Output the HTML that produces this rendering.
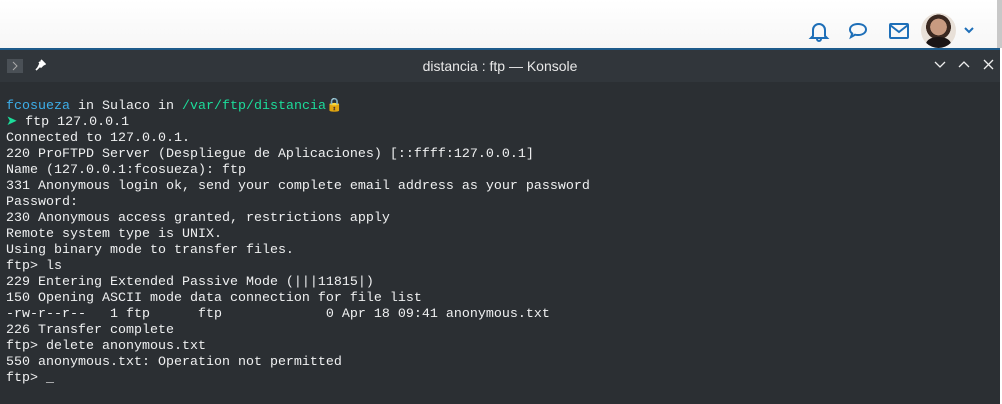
<!DOCTYPE html>
<html><head><meta charset="utf-8"><style>
html,body{margin:0;padding:0;width:1002px;height:402px;overflow:hidden;background:#fff}
.top{position:absolute;left:0;top:0;width:1002px;height:48px;background:linear-gradient(#fff,#f6f6f6)}
.sb{position:absolute;left:997px;top:0;width:5px;height:48px;background:#c8c8c8}
.win{position:absolute;left:0;top:48px;width:1000px;height:354px;background:#2b2f33;border-top:2px solid #1d5a8a}
.title{position:absolute;left:0;top:0;width:1000px;height:32px;background:#31363b;color:#e8e8e8;font:14px "Liberation Sans",sans-serif}
.term{position:absolute;left:6px;top:49px;font:13.33px/16px "Liberation Mono",monospace;color:#eff0f1;white-space:pre}
.b{color:#3daee9}.g{color:#1cdc9a}.y{color:#f0b400}
</style></head><body>
<div class="top">
<svg style="position:absolute;left:808px;top:20px" width="22" height="22" viewBox="0 0 22 22" fill="none" stroke="#1e6fb8" stroke-width="2"><path d="M5 16V10a6 6 0 0 1 12 0v6l2 2H3z"/><path d="M9 19a2 2 0 0 0 4 0"/></svg>
<svg style="position:absolute;left:848px;top:22px" width="20" height="18" viewBox="0 0 20 18" fill="none" stroke="#1e6fb8" stroke-width="2"><path d="M10 2c5 0 8 2.5 8 5.5S15 13 10 13c-1 0-2 0-3-.3L3 15l1.2-3.5C2.8 10.5 2 9 2 7.5 2 4.5 5 2 10 2z"/></svg>
<svg style="position:absolute;left:889px;top:23px" width="20" height="16" viewBox="0 0 20 16" fill="none" stroke="#1e6fb8" stroke-width="2"><rect x="1" y="1" width="18" height="14" rx="1"/><path d="M1 2l9 7 9-7"/></svg>
<div style="position:absolute;left:921px;top:13px;width:35px;height:35px;border-radius:50%;background:radial-gradient(circle at 50% 40%,#c89a80 0 30%,#3a2820 31% 45%,#e8e0d8 46%);overflow:hidden"><div style="position:absolute;left:5px;top:24px;width:25px;height:14px;background:#1a1414;border-radius:50% 50% 0 0"></div></div>
<svg style="position:absolute;left:964px;top:26px" width="10" height="8" viewBox="0 0 10 8" fill="none" stroke="#1e6fb8" stroke-width="2"><path d="M1 2l4 4 4-4"/></svg>
</div>
<div class="sb"></div>
<div class="win">
<div class="title">
<div style="position:absolute;left:7px;top:9px;width:16px;height:14px;background:#4a5056"></div>
<svg style="position:absolute;left:11px;top:11px" width="8" height="10" viewBox="0 0 8 10" fill="none" stroke="#aaa" stroke-width="1"><path d="M2 1l4 4-4 4"/></svg>
<svg style="position:absolute;left:34px;top:9px" width="12" height="12" viewBox="0 0 12 12" stroke="#fff" stroke-width="1.6" fill="#fff"><path d="M7 1l4 4-2 1-2 2-1-1-4 4M5 3l4 4"/></svg>
<div style="position:absolute;left:0;width:1000px;top:8px;text-align:center">distancia : ftp — Konsole</div>
<svg style="position:absolute;left:934px;top:11px" width="12" height="8" viewBox="0 0 12 8" fill="none" stroke="#eee" stroke-width="1.3"><path d="M1 1l5 5 5-5"/></svg>
<svg style="position:absolute;left:958px;top:10px" width="12" height="8" viewBox="0 0 12 8" fill="none" stroke="#eee" stroke-width="1.3"><path d="M1 7l5-5 5 5"/></svg>
<svg style="position:absolute;left:983px;top:9px" width="11" height="11" viewBox="0 0 11 11" fill="none" stroke="#eee" stroke-width="1.3"><path d="M1 1l9 9M10 1l-9 9"/></svg>
</div>
<div class="term"><span class="b">fcosueza</span> in Sulaco in <span class="g">/var/ftp/distancia</span><span class="y">🔒</span>
<span class="g">➤</span> ftp 127.0.0.1
Connected to 127.0.0.1.
220 ProFTPD Server (Despliegue de Aplicaciones) [::ffff:127.0.0.1]
Name (127.0.0.1:fcosueza): ftp
331 Anonymous login ok, send your complete email address as your password
Password:
230 Anonymous access granted, restrictions apply
Remote system type is UNIX.
Using binary mode to transfer files.
ftp> ls
229 Entering Extended Passive Mode (|||11815|)
150 Opening ASCII mode data connection for file list
-rw-r--r--   1 ftp      ftp             0 Apr 18 09:41 anonymous.txt
226 Transfer complete
ftp> delete anonymous.txt
550 anonymous.txt: Operation not permitted
ftp> _</div>
</div>
</body></html>
